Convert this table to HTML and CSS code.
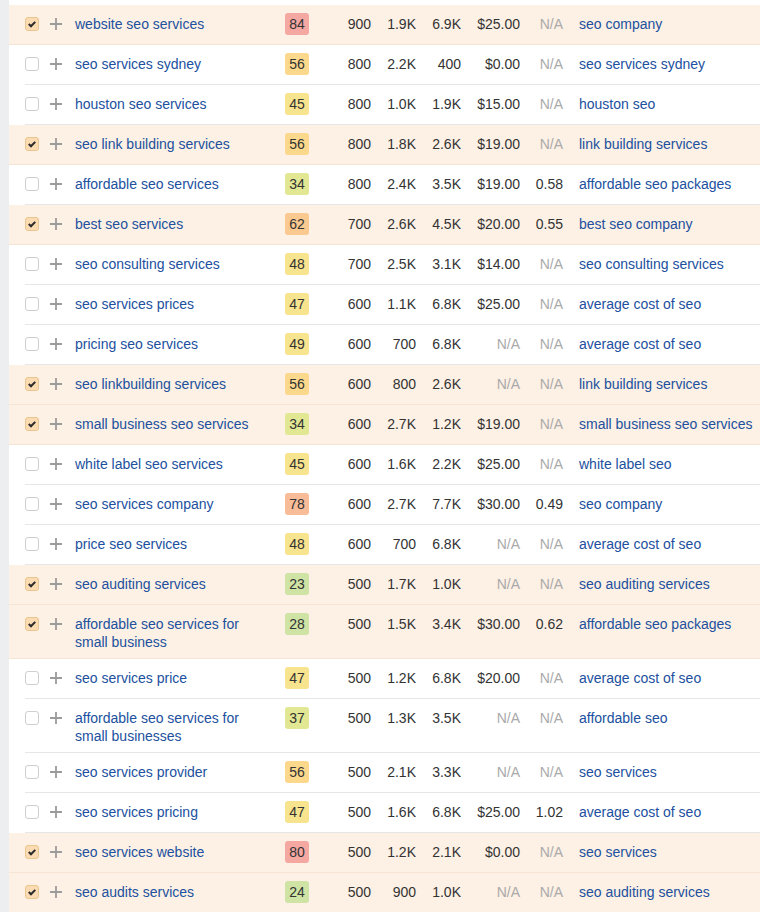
FILE: index.html
```html
<!DOCTYPE html>
<html>
<head>
<meta charset="utf-8">
<link rel="stylesheet" href="styles.css">
</head>
<body>
<div class="page">
  <div class="table">
    <div class="row sel"><span class="cb on"><svg viewBox="0 0 13 13"><path d="M3 6.6 L5.4 9 L10 4.2"/></svg></span><span class="plus"><svg viewBox="0 0 12 12"><path d="M6 0V12M0 6H12"/></svg></span><a class="kw">website seo services</a><span class="kdc"><span class="kd k84">84</span></span><span class="n">900</span><span class="n">1.9K</span><span class="n">6.9K</span><span class="n">$25.00</span><span class="n na">N/A</span><a class="pt">seo company</a></div>
    <div class="row"><span class="cb"></span><span class="plus"><svg viewBox="0 0 12 12"><path d="M6 0V12M0 6H12"/></svg></span><a class="kw">seo services sydney</a><span class="kdc"><span class="kd k56">56</span></span><span class="n">800</span><span class="n">2.2K</span><span class="n">400</span><span class="n">$0.00</span><span class="n na">N/A</span><a class="pt">seo services sydney</a></div>
    <div class="row"><span class="cb"></span><span class="plus"><svg viewBox="0 0 12 12"><path d="M6 0V12M0 6H12"/></svg></span><a class="kw">houston seo services</a><span class="kdc"><span class="kd k45">45</span></span><span class="n">800</span><span class="n">1.0K</span><span class="n">1.9K</span><span class="n">$15.00</span><span class="n na">N/A</span><a class="pt">houston seo</a></div>
    <div class="row sel"><span class="cb on"><svg viewBox="0 0 13 13"><path d="M3 6.6 L5.4 9 L10 4.2"/></svg></span><span class="plus"><svg viewBox="0 0 12 12"><path d="M6 0V12M0 6H12"/></svg></span><a class="kw">seo link building services</a><span class="kdc"><span class="kd k56">56</span></span><span class="n">800</span><span class="n">1.8K</span><span class="n">2.6K</span><span class="n">$19.00</span><span class="n na">N/A</span><a class="pt">link building services</a></div>
    <div class="row"><span class="cb"></span><span class="plus"><svg viewBox="0 0 12 12"><path d="M6 0V12M0 6H12"/></svg></span><a class="kw">affordable seo services</a><span class="kdc"><span class="kd k34">34</span></span><span class="n">800</span><span class="n">2.4K</span><span class="n">3.5K</span><span class="n">$19.00</span><span class="n">0.58</span><a class="pt">affordable seo packages</a></div>
    <div class="row sel"><span class="cb on"><svg viewBox="0 0 13 13"><path d="M3 6.6 L5.4 9 L10 4.2"/></svg></span><span class="plus"><svg viewBox="0 0 12 12"><path d="M6 0V12M0 6H12"/></svg></span><a class="kw">best seo services</a><span class="kdc"><span class="kd k62">62</span></span><span class="n">700</span><span class="n">2.6K</span><span class="n">4.5K</span><span class="n">$20.00</span><span class="n">0.55</span><a class="pt">best seo company</a></div>
    <div class="row"><span class="cb"></span><span class="plus"><svg viewBox="0 0 12 12"><path d="M6 0V12M0 6H12"/></svg></span><a class="kw">seo consulting services</a><span class="kdc"><span class="kd k45">48</span></span><span class="n">700</span><span class="n">2.5K</span><span class="n">3.1K</span><span class="n">$14.00</span><span class="n na">N/A</span><a class="pt">seo consulting services</a></div>
    <div class="row"><span class="cb"></span><span class="plus"><svg viewBox="0 0 12 12"><path d="M6 0V12M0 6H12"/></svg></span><a class="kw">seo services prices</a><span class="kdc"><span class="kd k45">47</span></span><span class="n">600</span><span class="n">1.1K</span><span class="n">6.8K</span><span class="n">$25.00</span><span class="n na">N/A</span><a class="pt">average cost of seo</a></div>
    <div class="row"><span class="cb"></span><span class="plus"><svg viewBox="0 0 12 12"><path d="M6 0V12M0 6H12"/></svg></span><a class="kw">pricing seo services</a><span class="kdc"><span class="kd k45">49</span></span><span class="n">600</span><span class="n">700</span><span class="n">6.8K</span><span class="n na">N/A</span><span class="n na">N/A</span><a class="pt">average cost of seo</a></div>
    <div class="row sel"><span class="cb on"><svg viewBox="0 0 13 13"><path d="M3 6.6 L5.4 9 L10 4.2"/></svg></span><span class="plus"><svg viewBox="0 0 12 12"><path d="M6 0V12M0 6H12"/></svg></span><a class="kw">seo linkbuilding services</a><span class="kdc"><span class="kd k56">56</span></span><span class="n">600</span><span class="n">800</span><span class="n">2.6K</span><span class="n na">N/A</span><span class="n na">N/A</span><a class="pt">link building services</a></div>
    <div class="row sel"><span class="cb on"><svg viewBox="0 0 13 13"><path d="M3 6.6 L5.4 9 L10 4.2"/></svg></span><span class="plus"><svg viewBox="0 0 12 12"><path d="M6 0V12M0 6H12"/></svg></span><a class="kw">small business seo services</a><span class="kdc"><span class="kd k34">34</span></span><span class="n">600</span><span class="n">2.7K</span><span class="n">1.2K</span><span class="n">$19.00</span><span class="n na">N/A</span><a class="pt">small business seo services</a></div>
    <div class="row"><span class="cb"></span><span class="plus"><svg viewBox="0 0 12 12"><path d="M6 0V12M0 6H12"/></svg></span><a class="kw">white label seo services</a><span class="kdc"><span class="kd k45">45</span></span><span class="n">600</span><span class="n">1.6K</span><span class="n">2.2K</span><span class="n">$25.00</span><span class="n na">N/A</span><a class="pt">white label seo</a></div>
    <div class="row"><span class="cb"></span><span class="plus"><svg viewBox="0 0 12 12"><path d="M6 0V12M0 6H12"/></svg></span><a class="kw">seo services company</a><span class="kdc"><span class="kd k78">78</span></span><span class="n">600</span><span class="n">2.7K</span><span class="n">7.7K</span><span class="n">$30.00</span><span class="n">0.49</span><a class="pt">seo company</a></div>
    <div class="row"><span class="cb"></span><span class="plus"><svg viewBox="0 0 12 12"><path d="M6 0V12M0 6H12"/></svg></span><a class="kw">price seo services</a><span class="kdc"><span class="kd k45">48</span></span><span class="n">600</span><span class="n">700</span><span class="n">6.8K</span><span class="n na">N/A</span><span class="n na">N/A</span><a class="pt">average cost of seo</a></div>
    <div class="row sel"><span class="cb on"><svg viewBox="0 0 13 13"><path d="M3 6.6 L5.4 9 L10 4.2"/></svg></span><span class="plus"><svg viewBox="0 0 12 12"><path d="M6 0V12M0 6H12"/></svg></span><a class="kw">seo auditing services</a><span class="kdc"><span class="kd k23">23</span></span><span class="n">500</span><span class="n">1.7K</span><span class="n">1.0K</span><span class="n na">N/A</span><span class="n na">N/A</span><a class="pt">seo auditing services</a></div>
    <div class="row sel"><span class="cb on"><svg viewBox="0 0 13 13"><path d="M3 6.6 L5.4 9 L10 4.2"/></svg></span><span class="plus"><svg viewBox="0 0 12 12"><path d="M6 0V12M0 6H12"/></svg></span><a class="kw">affordable seo services for small business</a><span class="kdc"><span class="kd k23">28</span></span><span class="n">500</span><span class="n">1.5K</span><span class="n">3.4K</span><span class="n">$30.00</span><span class="n">0.62</span><a class="pt">affordable seo packages</a></div>
    <div class="row"><span class="cb"></span><span class="plus"><svg viewBox="0 0 12 12"><path d="M6 0V12M0 6H12"/></svg></span><a class="kw">seo services price</a><span class="kdc"><span class="kd k45">47</span></span><span class="n">500</span><span class="n">1.2K</span><span class="n">6.8K</span><span class="n">$20.00</span><span class="n na">N/A</span><a class="pt">average cost of seo</a></div>
    <div class="row"><span class="cb"></span><span class="plus"><svg viewBox="0 0 12 12"><path d="M6 0V12M0 6H12"/></svg></span><a class="kw">affordable seo services for small businesses</a><span class="kdc"><span class="kd k34">37</span></span><span class="n">500</span><span class="n">1.3K</span><span class="n">3.5K</span><span class="n na">N/A</span><span class="n na">N/A</span><a class="pt">affordable seo</a></div>
    <div class="row"><span class="cb"></span><span class="plus"><svg viewBox="0 0 12 12"><path d="M6 0V12M0 6H12"/></svg></span><a class="kw">seo services provider</a><span class="kdc"><span class="kd k56">56</span></span><span class="n">500</span><span class="n">2.1K</span><span class="n">3.3K</span><span class="n na">N/A</span><span class="n na">N/A</span><a class="pt">seo services</a></div>
    <div class="row"><span class="cb"></span><span class="plus"><svg viewBox="0 0 12 12"><path d="M6 0V12M0 6H12"/></svg></span><a class="kw">seo services pricing</a><span class="kdc"><span class="kd k45">47</span></span><span class="n">500</span><span class="n">1.6K</span><span class="n">6.8K</span><span class="n">$25.00</span><span class="n">1.02</span><a class="pt">average cost of seo</a></div>
    <div class="row sel"><span class="cb on"><svg viewBox="0 0 13 13"><path d="M3 6.6 L5.4 9 L10 4.2"/></svg></span><span class="plus"><svg viewBox="0 0 12 12"><path d="M6 0V12M0 6H12"/></svg></span><a class="kw">seo services website</a><span class="kdc"><span class="kd k84">80</span></span><span class="n">500</span><span class="n">1.2K</span><span class="n">2.1K</span><span class="n">$0.00</span><span class="n na">N/A</span><a class="pt">seo services</a></div>
    <div class="row sel"><span class="cb on"><svg viewBox="0 0 13 13"><path d="M3 6.6 L5.4 9 L10 4.2"/></svg></span><span class="plus"><svg viewBox="0 0 12 12"><path d="M6 0V12M0 6H12"/></svg></span><a class="kw">seo audits services</a><span class="kdc"><span class="kd k23">24</span></span><span class="n">500</span><span class="n">900</span><span class="n">1.0K</span><span class="n na">N/A</span><span class="n na">N/A</span><a class="pt">seo auditing services</a></div>
  </div>
</div>
</body>
</html>
```

FILE: styles.css
```css
html, body {
  margin: 0;
  padding: 0;
  background: #ffffff;
}
body {
  font-family: "Liberation Sans", Arial, sans-serif;
  font-size: 14px;
  line-height: 18px;
  color: #333333;
  overflow: hidden;
}
.page {
  border-left: 9px solid #eceef0;
  min-height: 912px;
  padding-top: 5px;
  box-sizing: border-box;
}
.table {
  display: flex;
  flex-direction: column;
}
.row {
  display: grid;
  grid-template-columns: 35px 31px 190px 60px 46px 45px 45px 59px 43px 1fr;
  align-items: start;
  box-sizing: border-box;
  min-height: 40px;
  padding: 10px 0 8px 0;
  background-image: linear-gradient(#e6e6e6, #e6e6e6);
  background-repeat: no-repeat;
  background-position: 16px 100%;
  background-size: calc(100% - 16px) 1px;
  white-space: nowrap;
}
.row.sel {
  background-color: #fdf0e4;
  background-image: linear-gradient(#f6e4d4, #f6e4d4);
  background-position: 0 100%;
  background-size: 100% 1px;
}
.cb {
  display: block;
  width: 14px;
  height: 14px;
  margin: 2px 0 0 16px;
  border: 1px solid #cfcfcf;
  border-radius: 3px;
  background: #ffffff;
  box-sizing: border-box;
}
.cb.on {
  background: #fbdcb2;
  border-color: #eac58f;
}
.cb svg {
  display: block;
  width: 12px;
  height: 12px;
}
.cb svg path {
  fill: none;
  stroke: #2b2b2b;
  stroke-width: 2.2;
}
.plus {
  display: block;
  padding: 3px 0 0 6px;
}
.plus svg {
  display: block;
  width: 12px;
  height: 12px;
}
.plus svg path {
  stroke: #9b9b9b;
  stroke-width: 1.8;
  fill: none;
}
.kw, .pt {
  color: #21509e;
  text-decoration: none;
}
.kw {
  white-space: normal;
  padding-right: 8px;
}
.pt {
  padding-left: 16px;
}
.kdc {
  display: block;
  padding-left: 20px;
}
.kd {
  display: block;
  width: 24px;
  height: 22px;
  margin-top: -2px;
  margin-bottom: -2px;
  line-height: 22px;
  text-align: center;
  border-radius: 3px;
  color: #333333;
}
.k84 { background: #f5a7a2; }
.k78 { background: #f8bc98; }
.k62 { background: #fac98f; }
.k56 { background: #fbd88c; }
.k45 { background: #f8e38e; }
.k34 { background: #e1e792; }
.k23 { background: #cee3a4; }
.n {
  text-align: right;
}
.na {
  color: #aaaaaa;
}
```
